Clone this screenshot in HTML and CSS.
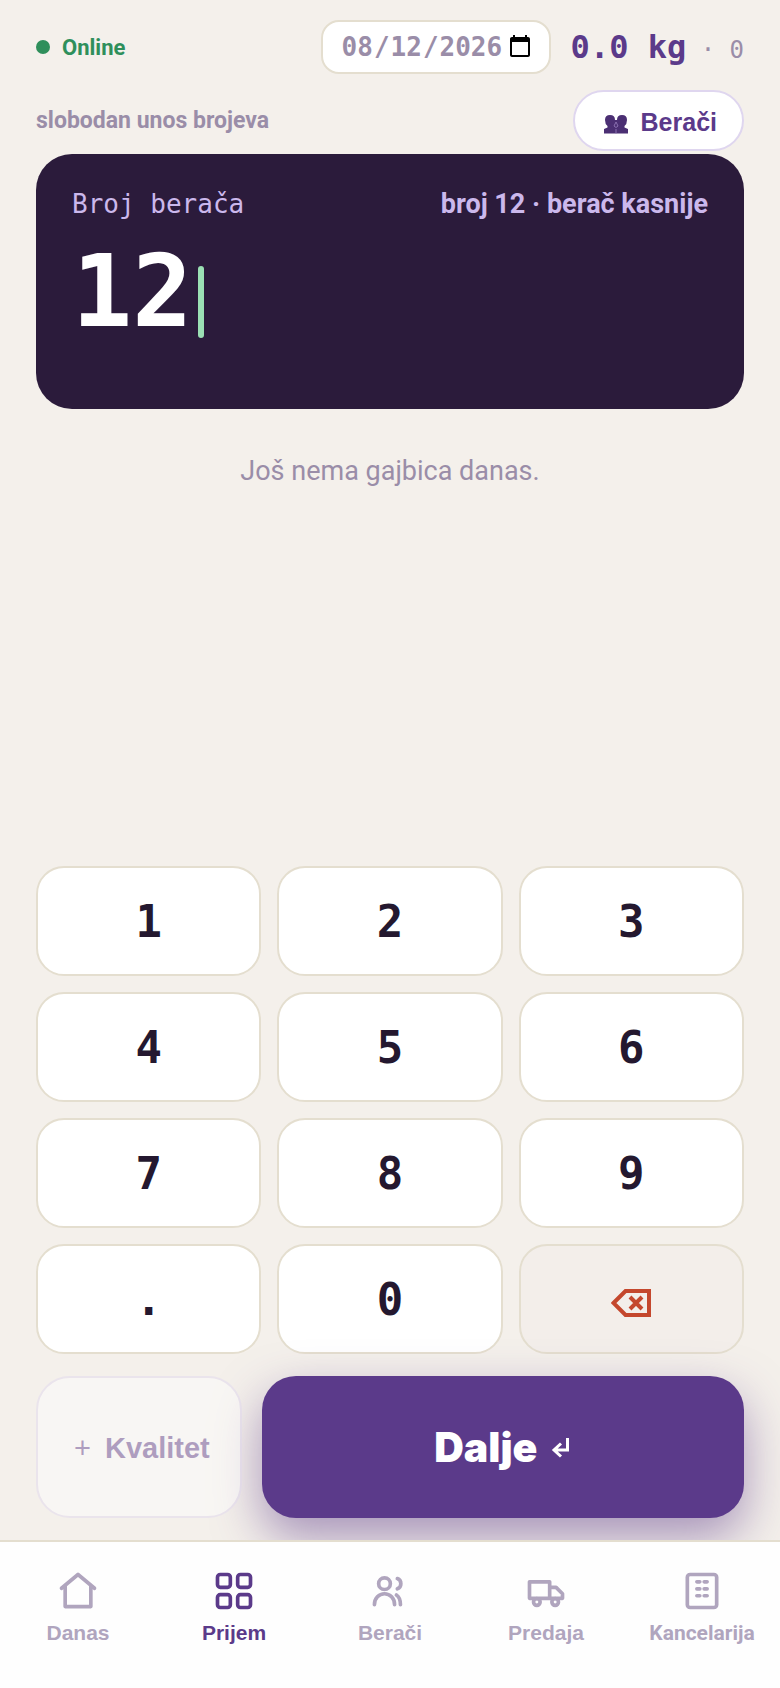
FILE: index.html
```html
<!DOCTYPE html>
<html lang="sr-Latn">
<head>
    <meta charset="utf-8">
    <meta name="viewport" content="width=device-width, initial-scale=1">
    <title>Prijem</title>
    <link rel="stylesheet" href="styles.css">
</head>
<body>
    <header class="topbar">
        <div class="status"><span class="dot"></span>Online</div>
        <input class="date" type="date" value="2026-08-12" aria-label="Datum">
        <div class="total">0.0 kg<span class="count"> · 0</span></div>
    </header>

    <main class="screen">
        <div class="subbar">
            <span class="hint">slobodan unos brojeva</span>
            <button class="pickers" type="button">
                <svg class="pickers-icon" viewBox="0 0 24 20" aria-hidden="true">
                    <path d="M1 6Q1 1 6 1t5 5h2q0-5 5-5t5 5q0 4-2.500 6v1.500l3.500 1.500v4.500H0V15l3.500-1.500V12Q1 10 1 6z"/>
                    <path class="seam" d="M12 15v4.500M12 8l-2 4 2 1.500 2-1.500z"/>
                </svg>
                Berači
            </button>
        </div>

        <section class="display">
            <div class="display-head">
                <span class="display-label">Broj berača</span>
                <span class="display-note">broj 12 · berač kasnije</span>
            </div>
            <div class="display-value">12<span class="caret"></span></div>
        </section>

        <p class="empty">Još nema gajbica danas.</p>

        <div class="keypad">
            <button class="key" type="button">1</button>
            <button class="key" type="button">2</button>
            <button class="key" type="button">3</button>
            <button class="key" type="button">4</button>
            <button class="key" type="button">5</button>
            <button class="key" type="button">6</button>
            <button class="key" type="button">7</button>
            <button class="key" type="button">8</button>
            <button class="key" type="button">9</button>
            <button class="key" type="button">.</button>
            <button class="key" type="button">0</button>
            <button class="key key-delete" type="button" aria-label="Obriši">
                <svg class="delete-icon" viewBox="0 0 40 28" aria-hidden="true">
                    <path d="M2.500 14 14.500 2H38v24H14.500z"/>
                    <path d="m19 8 12 12m0-12L19 20"/>
                </svg>
            </button>
        </div>

        <div class="actions">
            <button class="quality" type="button" disabled><span class="plus">+</span>Kvalitet</button>
            <button class="next" type="button">Dalje
                <svg class="enter-icon" viewBox="0 0 20 22" aria-hidden="true">
                    <path d="M16.500 1v12H3M10 6.500 3 13l7 6.500"/>
                </svg>
            </button>
        </div>
    </main>

    <nav class="tabs">
        <a class="tab" href="#danas">
            <svg viewBox="0 0 24 24" aria-hidden="true"><path d="M3 10.500 12 3l9 7.500M5 9.500v11h14v-11"/></svg>
            Danas
        </a>
        <a class="tab active" href="#prijem">
            <svg viewBox="0 0 24 24" aria-hidden="true">
                <rect x="3" y="3" width="7" height="7" rx="1.500"/>
                <rect x="14" y="3" width="7" height="7" rx="1.500"/>
                <rect x="3" y="14" width="7" height="7" rx="1.500"/>
                <rect x="14" y="14" width="7" height="7" rx="1.500"/>
            </svg>
            Prijem
        </a>
        <a class="tab" href="#beraci">
            <svg viewBox="0 0 24 24" aria-hidden="true">
                <circle cx="9" cy="8" r="3.200"/>
                <path d="M3.500 19.500c0-3.500 2.500-6 5.500-6s5.500 2.500 5.500 6M16 5.200a3 3 0 0 1 0 5.600M15.500 14.200c1.500 1 2.200 3 2.200 5.300"/>
            </svg>
            Berači
        </a>
        <a class="tab" href="#predaja">
            <svg viewBox="0 0 24 24" aria-hidden="true">
                <path d="M3 7h11v9H3zM14 10h3.500l3.500 3.500V16h-7"/>
                <circle cx="7" cy="18" r="1.800"/>
                <circle cx="17" cy="18" r="1.800"/>
            </svg>
            Predaja
        </a>
        <a class="tab tab-office" href="#kancelarija">
            <svg viewBox="0 0 24 24" aria-hidden="true">
                <rect x="4" y="3" width="16" height="18" rx="1.500"/>
                <path d="M9.200 7h1.600M13.200 7h1.600M9.200 10.800h1.600M13.200 10.800h1.600M9.200 14.600h1.600M13.200 14.600h1.600"/>
            </svg>
            Kancelarija
        </a>
    </nav>
</body>
</html>
```
FILE: styles.css
```css
:root {
    --bg: #f4f0eb;
    --line: #e4decf;
    --ink: #24182f;
    --purple: #5b3a8a;
    --muted: #9a8da8;
    --lilac: #cbb8ec;
    --mono: "DejaVu Sans Mono", monospace;
    --sans: Roboto, "Liberation Sans", sans-serif;
}
* {
    box-sizing: border-box;
}
body {
    margin: 0;
    min-height: 100vh;
    display: flex;
    flex-direction: column;
    background: var(--bg);
    color: var(--ink);
    font-family: var(--sans);
}
button {
    font-family: "Liberation Sans", sans-serif;
    font-weight: 700;
    cursor: pointer;
}
.topbar {
    display: flex;
    align-items: center;
    gap: 20px;
    padding: 20px 36px 16px;
}
.status {
    flex: 1;
    display: flex;
    align-items: center;
    gap: 12px;
    color: #2f8f5b;
    font-size: 22px;
    font-weight: 700;
}
.dot {
    width: 14px;
    height: 14px;
    border-radius: 50%;
    background: currentColor;
}
.date {
    width: 230px;
    height: 54px;
    padding: 0 14px 0 18px;
    border: 2px solid var(--line);
    border-radius: 18px;
    background: white;
    color: var(--muted);
    font-family: var(--mono);
    font-size: 26px;
    font-weight: 700;
}
.date::-webkit-calendar-picker-indicator {
    margin-inline-start: 0;
}
.total {
    color: var(--purple);
    font-family: var(--mono);
    font-size: 32px;
    font-weight: 700;
    white-space: pre;
}
.count {
    color: var(--muted);
    font-size: 24px;
    font-weight: 400;
}
.screen {
    flex: 1;
    display: flex;
    flex-direction: column;
    padding: 0 36px 22px;
}
.subbar {
    display: flex;
    align-items: center;
    justify-content: space-between;
    margin-bottom: 3px;
}
.hint {
    color: var(--muted);
    font-size: 23px;
    font-weight: 700;
}
.pickers {
    display: flex;
    align-items: center;
    gap: 13px;
    height: 61px;
    padding: 3px 25px 0 29px;
    border: 2px solid #dfd6ef;
    border-radius: 31px;
    background: white;
    color: var(--purple);
    font-size: 25px;
}
.pickers-icon {
    width: 24px;
    height: 20px;
    margin-top: 4px;
    fill: #4b2f73;
}
.seam {
    stroke: #8a70b0;
}
.display {
    min-height: 255px;
    padding: 32px 36px;
    border-radius: 36px;
    background: #2b1b3b;
    color: white;
}
.display-head {
    display: flex;
    align-items: center;
    justify-content: space-between;
    color: var(--lilac);
    font-size: 26px;
    line-height: 36px;
}
.display-label {
    font-family: var(--mono);
}
.display-note {
    font-size: 27px;
    font-weight: 700;
}
.display-value {
    display: flex;
    align-items: center;
    gap: 6px;
    font-family: var(--mono);
    font-size: 100px;
    font-weight: 700;
    line-height: 140px;
}
.caret {
    width: 6px;
    height: 72px;
    margin-top: 20px;
    border-radius: 3px;
    background: #9be0b4;
}
.empty {
    flex: 1;
    margin: 0;
    padding-top: 44px;
    color: var(--muted);
    font-size: 27px;
    line-height: 36px;
    text-align: center;
}
.keypad {
    display: grid;
    grid-template-columns: repeat(3, 1fr);
    gap: 16px;
    margin-bottom: 22px;
}
.key {
    display: flex;
    align-items: center;
    justify-content: center;
    height: 110px;
    border: 2px solid var(--line);
    border-radius: 28px;
    background: white;
    color: var(--ink);
    font-family: var(--mono);
    font-size: 44px;
}
.key-delete {
    background: #f3eeea;
}
.delete-icon {
    width: 40px;
    height: 28px;
    margin-top: 8px;
    fill: none;
    stroke: #c4472d;
    stroke-width: 4;
}
.actions {
    display: flex;
    gap: 20px;
}
.actions button {
    display: flex;
    align-items: center;
    justify-content: center;
    height: 142px;
    border-radius: 34px;
}
.quality {
    gap: 14px;
    padding: 3px 30px 0 36px;
    border: 2px solid #dfd6ef;
    background: white;
    color: var(--purple);
    font-size: 29px;
    opacity: 0.45;
}
.plus {
    font-weight: 400;
}
.next {
    flex: 1;
    gap: 14px;
    border: 0;
    background: var(--purple);
    box-shadow: 0 20px 48px rgba(91, 58, 138, 0.5);
    color: white;
    font-family: Inter, sans-serif;
    font-size: 41px;
    font-weight: 900;
}
.enter-icon {
    width: 20px;
    height: 22px;
    margin-top: 2px;
    fill: none;
    stroke: white;
    stroke-width: 3;
}
.tabs {
    position: relative;
    display: grid;
    grid-template-columns: repeat(5, 1fr);
    height: 148px;
    padding-top: 27px;
    border-top: 2px solid var(--line);
    background: #fefefe;
}
.tab {
    display: flex;
    flex-direction: column;
    align-items: center;
    gap: 7px;
    color: #b0a5be;
    font-family: "Liberation Sans", sans-serif;
    font-size: 21px;
    font-weight: 700;
    line-height: 26px;
    text-decoration: none;
}
.tab svg {
    width: 44px;
    height: 44px;
    fill: none;
    stroke: currentColor;
    stroke-width: 2;
    stroke-linecap: round;
    stroke-linejoin: round;
}
.active {
    color: var(--purple);
}
.tab-office {
    font-family: var(--sans);
}
```
